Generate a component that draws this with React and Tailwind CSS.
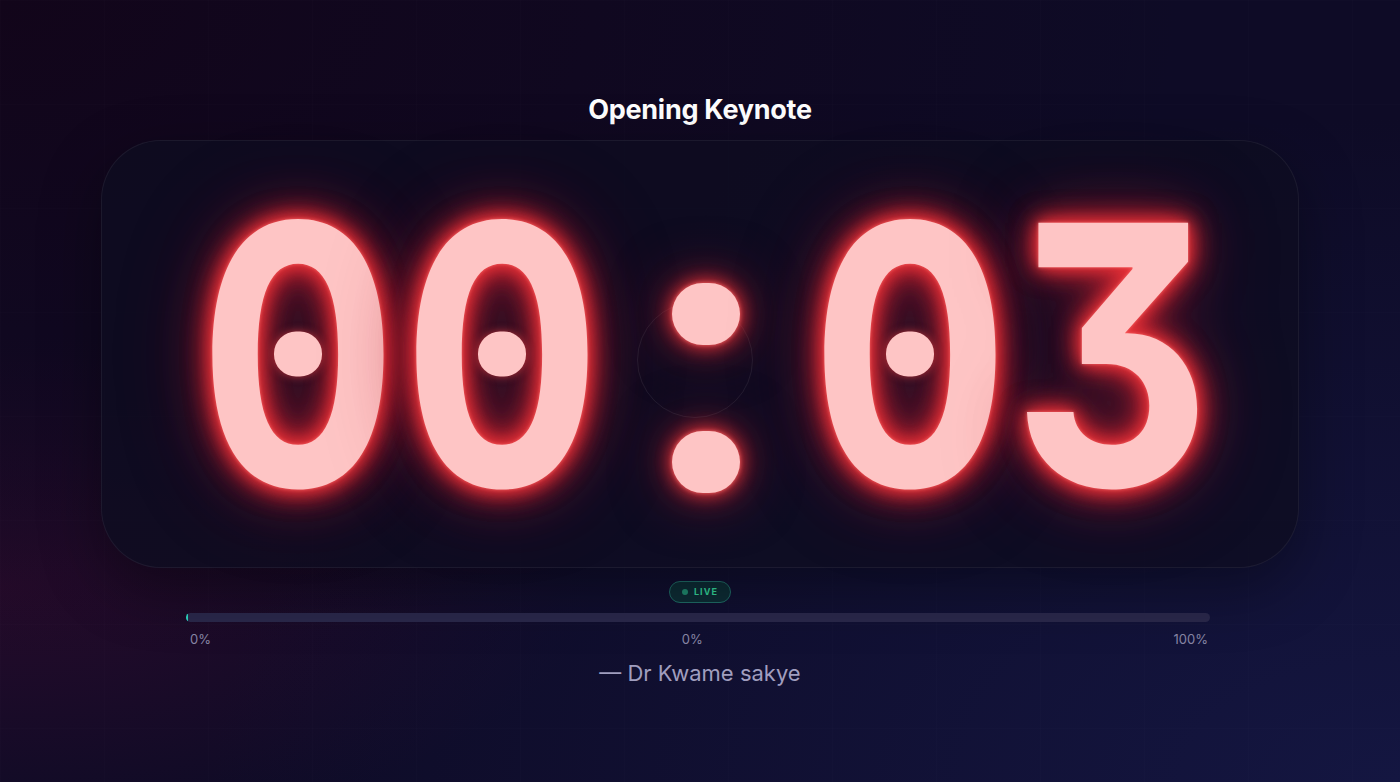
import React from 'react';

const glow =
  "[text-shadow:0_0_4px_rgba(255,110,110,0.9),0_0_16px_rgba(235,55,60,1),0_0_30px_rgba(220,40,50,0.9),0_0_30px_rgba(220,40,50,0.8),0_0_60px_rgba(190,30,45,0.7),0_0_100px_rgba(150,20,45,0.4)]";
const dotGlow =
  "shadow-[0_0_4px_rgba(255,110,110,0.9),0_0_16px_rgba(235,55,60,0.9),0_0_30px_rgba(220,40,50,0.8),0_0_60px_rgba(190,30,45,0.6)]";

function Glyph({ char }) {
  return (
    <div className="relative flex h-[273px] w-[204px] items-center justify-center">
      <span
        className={`inline-block scale-x-[0.85] font-['Inter',sans-serif] text-[362px] font-bold leading-none text-[#fec5c5] [font-feature-settings:'tnum','cv09'] ${glow}`}
      >
        {char}
      </span>
      {char === '0' && (
        <span className="absolute left-1/2 top-1/2 h-[45px] w-[48px] -translate-x-1/2 -translate-y-1/2 rounded-[22px] bg-[#fec5c5] shadow-[0_0_8px_rgba(239,68,68,0.7)]" />
      )}
    </div>
  );
}

function Colon() {
  return (
    <div aria-label=":" className="relative flex h-[273px] w-[204px] flex-col items-center justify-between pt-[65px]">
      <div className="absolute left-[33px] top-[84px] h-[116px] w-[116px] rounded-full border border-white/[0.07]" />
      <div className={`relative h-[62px] w-[68px] rounded-full bg-[#fec5c5] ${dotGlow}`} />
      <div className={`relative mb-[-2px] h-[62px] w-[68px] rounded-full bg-[#fec5c5] ${dotGlow}`} />
    </div>
  );
}

export default function App() {
  return (
    <div className="relative min-h-[782px] w-full overflow-hidden bg-[#0e0b26] font-['Inter',sans-serif]">
      {/* background tint + faint grid */}
      <div className="absolute inset-0 bg-[radial-gradient(ellipse_at_0%_0%,#12051a_0%,transparent_60%),radial-gradient(ellipse_at_100%_100%,#141641_0%,transparent_60%),radial-gradient(ellipse_at_0%_75%,rgba(80,10,50,0.35)_0%,transparent_30%)]" />
      <div className="absolute inset-0 opacity-40 bg-[linear-gradient(rgba(255,255,255,0.025)_1px,transparent_1px),linear-gradient(90deg,rgba(255,255,255,0.025)_1px,transparent_1px)] bg-[size:104px_104px]" />

      <div className="relative flex flex-col items-center pt-[92px]">
        <h1 className="text-[27px] font-bold leading-[36px] tracking-[-0.01em] text-white">Opening Keynote</h1>

        <div className="relative mt-[12px] flex h-[428px] w-[1198px] items-center justify-center rounded-[60px] border border-white/[0.06] bg-[#0e0d20]/80 shadow-[0_20px_60px_rgba(0,0,0,0.35)]">
          <div className="ml-[12px] flex items-center">
            <Glyph char="0" />
            <Glyph char="0" />
            <Colon />
            <Glyph char="0" />
            <Glyph char="3" />
          </div>
        </div>

        <div className="mt-[13px] flex h-[22px] items-center gap-[6px] rounded-full border border-[#1f6b66] bg-[#0d2c35] px-[12px]">
          <span className="h-[6px] w-[6px] rounded-full bg-[#1f8a6e]" />
          <span className="text-[9px] font-bold tracking-[0.12em] text-[#34d399]">LIVE</span>
        </div>

        <div className="mt-[10px] mr-[4px] w-[1024px]">
          <div className="h-[9px] w-full overflow-hidden rounded-full bg-[#2a284b]">
            <div className="h-full w-[2px] rounded-full bg-[#2dd4bf]" />
          </div>
          <div className="mt-[9px] flex justify-between pl-[4px] pr-[2px] text-[13px] leading-[16px] text-[#8886a6]">
            <span>0%</span>
            <span>0%</span>
            <span>100%</span>
          </div>
        </div>

        <p className="mt-[12px] text-[22px] leading-[28px] text-[#a09ebf]">— Dr Kwame sakye</p>
      </div>
    </div>
  );
}
